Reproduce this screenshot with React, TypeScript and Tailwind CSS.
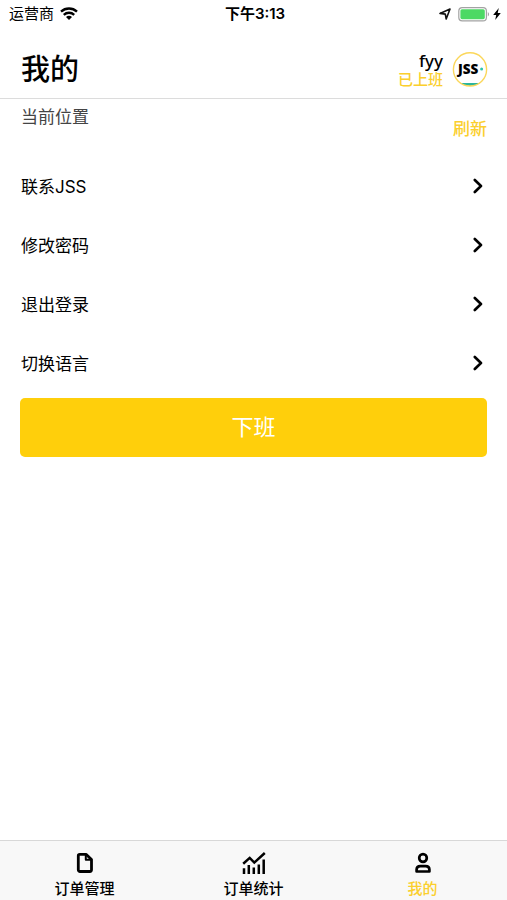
import clsx from "clsx";

const menu = ["联系JSS", "修改密码", "退出登录", "切换语言"];

function WifiIcon() {
  return (
    <svg viewBox="0 0 18 15" className="h-[15px] w-[18px]" fill="none" stroke="black" strokeWidth="2.4">
      <path d="M1 4.6C5.6.4 12.4.4 17 4.6" />
      <path d="M3.8 7.8c3-2.7 7.4-2.7 10.4 0" />
      <path d="M6 9.9c1.7-1.4 4.3-1.4 6 0l-3 3z" fill="black" stroke="none" />
    </svg>
  );
}

function LocationIcon() {
  return (
    <svg viewBox="0 0 12 12" className="size-3" fill="none" stroke="#111" strokeWidth="1.6" strokeLinejoin="round">
      <path d="M1 5.4 11 1 7.2 11 6.3 6.1z" />
    </svg>
  );
}

function BatteryIcon() {
  return (
    <svg viewBox="0 0 32 15" className="h-[15px] w-8" fill="none">
      <rect x=".8" y=".6" width="27.6" height="13.2" rx="3.4" stroke="#a3a3a3" strokeWidth="1.2" />
      <rect x="2.4" y="2.2" width="24.4" height="10" rx="1.6" fill="#4cd964" />
      <path d="M29.8 5c1.7.8 1.7 3.6 0 4.4z" fill="#a3a3a3" />
    </svg>
  );
}

function BoltIcon() {
  return (
    <svg viewBox="0 0 8 12" className="h-3 w-2" fill="black">
      <path d="M5.8 0 .2 7h3L2.2 12 7.8 5H4.7z" />
    </svg>
  );
}

function Avatar() {
  return (
    <svg viewBox="0 0 36 36" className="size-9" role="img" aria-label="JSS">
      <circle cx="18" cy="17.4" r="16.6" fill="white" />
      <path d="M8.4 31h19.2A16.6 16.6 0 0 1 8.4 31z" fill="#2bb59b" />
      <circle cx="18" cy="17.4" r="16.6" fill="none" stroke="#fbd75a" strokeWidth="1.4" />
      <text
        x="6"
        y="22"
        fontSize="13.5"
        className="font-['Open_Sans','Noto_Sans',sans-serif] font-extrabold"
      >
        JSS
      </text>
      <circle cx="29.6" cy="17" r="1.5" fill="#2cc5ae" />
    </svg>
  );
}

function ChevronIcon() {
  return (
    <svg viewBox="0 0 10 16" className="h-4 w-[10px]" fill="none" stroke="black" strokeWidth="2.6" strokeLinecap="round" strokeLinejoin="round">
      <path d="M1.8 2 8 8l-6.2 6" />
    </svg>
  );
}

function DocumentIcon() {
  return (
    <svg viewBox="0 0 24 24" className="size-6" fill="none" stroke="black" strokeWidth="2.8" strokeLinejoin="round">
      <path d="M6.7 3.4h6.6l5.2 5v10.4a1.7 1.7 0 0 1-1.7 1.7H7a1.7 1.7 0 0 1-1.7-1.7V4.8a1.4 1.4 0 0 1 1.4-1.4z" />
      <path d="M12.8 3.6v5.1h5.3" strokeWidth="2" />
    </svg>
  );
}

function ChartIcon() {
  return (
    <svg viewBox="0 0 24 24" className="size-6" fill="none" stroke="black" strokeWidth="2.5">
      <path d="m1.2 12.7 6.5-5.8 4.6 4.7L22.8 2" />
      <path d="M2 17.2V23M6.8 14V23M11.8 16.6V23M16.8 13.4V23M21.7 8.6V23" />
    </svg>
  );
}

function UserIcon() {
  return (
    <svg viewBox="0 0 24 24" className="size-6" fill="none" stroke="black" strokeWidth="2.7" strokeLinejoin="round">
      <circle cx="12" cy="7" r="3.8" />
      <path d="M5.6 20.5v-2c0-2.1 1.7-3.4 3.8-3.4h5.2c2.1 0 3.8 1.3 3.8 3.4v2z" />
    </svg>
  );
}

const tabs = [
  { label: "订单管理", Icon: DocumentIcon, active: false },
  { label: "订单统计", Icon: ChartIcon, active: false },
  { label: "我的", Icon: UserIcon, active: true },
];

export default function App() {
  return (
    <div className="flex min-h-screen flex-col bg-white font-['Inter','Noto_Sans_CJK_SC',sans-serif] text-black">
      <div className="grid h-7 grid-cols-3 items-center pr-[6px] pl-[9px] text-[15px] leading-5">
        <div className="flex items-center gap-[6px]">
          <span>运营商</span>
          <WifiIcon />
        </div>
        <span className="text-center font-semibold">下午3:13</span>
        <div className="flex items-center justify-end">
          <LocationIcon />
          <span className="ml-[7px]">
            <BatteryIcon />
          </span>
          <span className="ml-[3px]">
            <BoltIcon />
          </span>
        </div>
      </div>

      <header className="flex h-[71px] items-center justify-between border-b border-[#dcdcdc] pt-[14px] pr-[19px] pl-[21px]">
        <h1 className="text-[29px] leading-9 font-medium">我的</h1>
        <div className="flex items-center gap-[9px]">
          <div className="text-right">
            <p className="font-['Noto_Sans',sans-serif] text-[17px] leading-5 font-medium">fyy</p>
            <p className="text-[15px] leading-[18px] font-medium text-[#fbcf2d]">已上班</p>
          </div>
          <Avatar />
        </div>
      </header>

      <main className="flex-1 px-5">
        <section className="flex h-[59px] items-start justify-between pt-1 pl-px text-[17px]">
          <h2 className="leading-7 text-[#444]">当前位置</h2>
          <button type="button" className="mt-3 leading-7 font-medium text-[#fbcf2d]">
            刷新
          </button>
        </section>

        <ul>
          {menu.map((item) => (
            <li key={item}>
              <a href="#" className="flex h-[59px] items-start justify-between pt-4 pr-1 pl-px text-[17px] leading-[26px]">
                {item}
                <span className="pt-1">
                  <ChevronIcon />
                </span>
              </a>
            </li>
          ))}
        </ul>

        <button
          type="button"
          className="mt-1 h-[59px] w-full rounded-[5px] bg-[#ffcf0b] text-[22px] text-white"
        >
          下班
        </button>
      </main>

      <nav className="grid h-[60px] grid-cols-3 border-t border-[#d8d8d8] bg-[#f8f8f8]">
        {tabs.map(({ label, Icon, active }) => (
          <a
            key={label}
            href="#"
            className={clsx(
              "flex flex-col items-center gap-[2px] pt-[10px] text-[15px] leading-6 font-medium",
              active && "text-[#fbcf2d]"
            )}
          >
            <Icon />
            {label}
          </a>
        ))}
      </nav>
    </div>
  );
}
